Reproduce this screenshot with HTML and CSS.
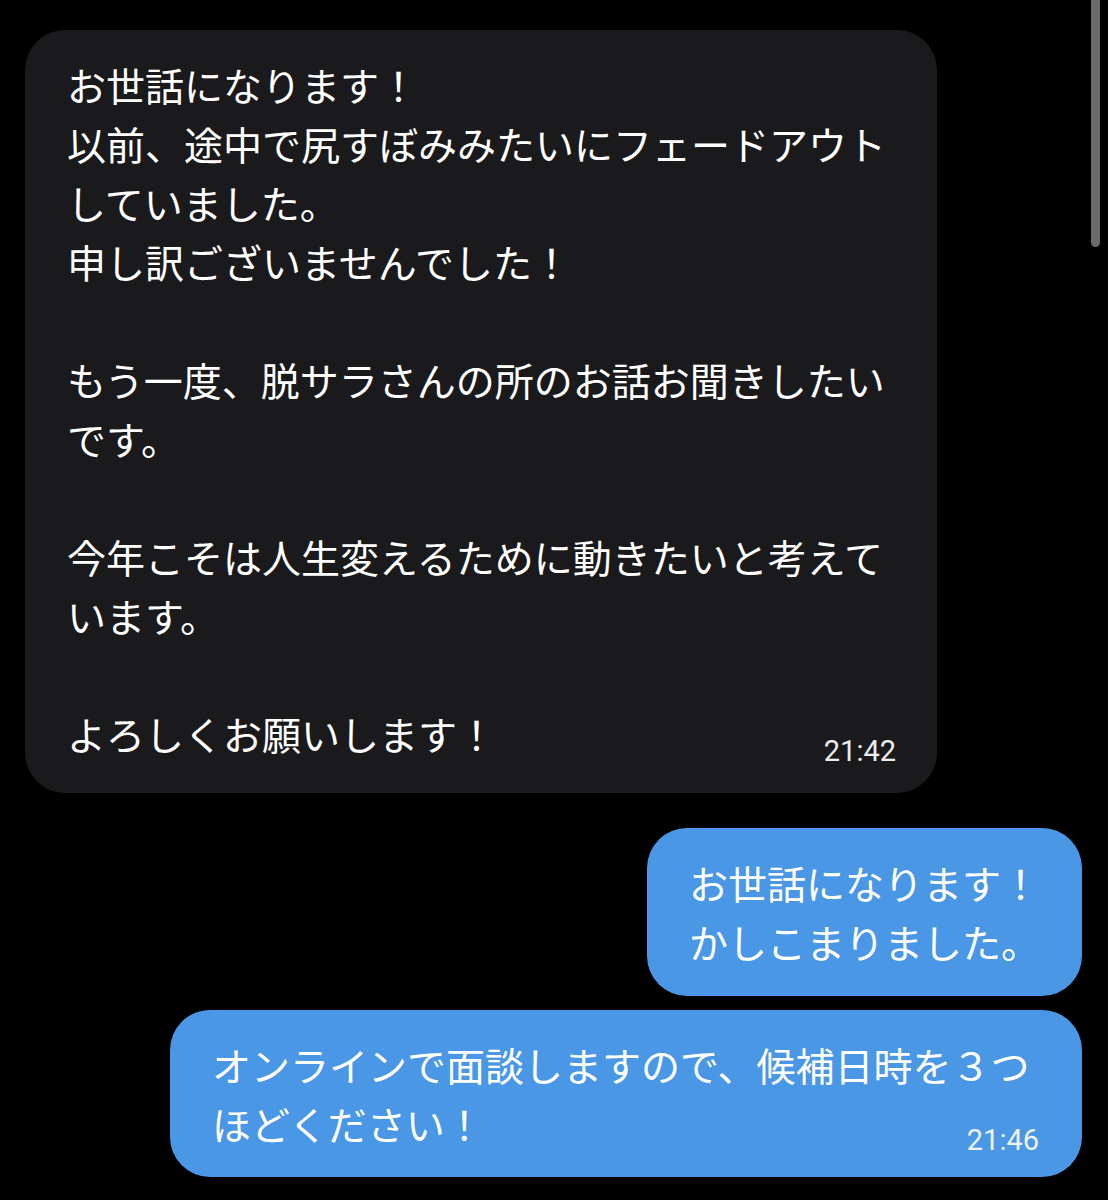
FILE: index.html
```html
<!DOCTYPE html>
<html lang="ja">
<head>
    <meta charset="UTF-8">
    <meta name="viewport" content="width=device-width, initial-scale=1.0">
    <title>メッセージ</title>
    <link rel="stylesheet" href="styles.css">
</head>
<body>
    <div class="chat">
        <div class="msg msg-in msg-wrap">
            <p class="msg-text">お世話になります！<br>以前、途中で尻すぼみみたいにフェードアウトしていました。<br>申し訳ございませんでした！<br><br>もう一度、脱サラさんの所のお話お聞きしたいです。<br><br>今年こそは人生変えるために動きたいと考えています。<br><br>よろしくお願いします！</p>
            <div class="msg-time">21:42</div>
        </div>
        <div class="msg msg-out msg-first">
            <p class="msg-text">お世話になります！<br>かしこまりました。</p>
        </div>
        <div class="msg msg-out msg-wrap">
            <p class="msg-text">オンラインで面談しますので、候補日時を３つ<br>ほどください！</p>
            <div class="msg-time">21:46</div>
        </div>
    </div>
    <div class="scroll-thumb"></div>
</body>
</html>
```

FILE: styles.css
```css
body {
    margin: 0;
    padding: 0;
    background-color: #000;
    color: #fff;
    font-family: "Noto Sans CJK JP", "Noto Sans", sans-serif;
}
.chat {
    display: flex;
    flex-direction: column;
    align-items: flex-start;
    padding: 30px 26px 0 25px;
}
.msg {
    box-sizing: border-box;
    max-width: 912px;
    padding: 25px 42px;
    border-radius: 40px;
}
.msg-wrap {
    width: 912px;
}
.msg-in {
    background-color: #1a1a1c;
    padding-bottom: 27px;
}
.msg-out {
    align-self: flex-end;
    background-color: #4a97e6;
    margin-top: 14px;
}
.msg-out.msg-first {
    margin-top: 35px;
}
.msg-text {
    margin: 0;
    font-size: 39px;
    line-height: 59px;
    line-break: strict;
}
.msg-time {
    display: flex;
    justify-content: flex-end;
    margin-top: -26px;
    margin-right: -1px;
    font-family: Roboto, "Liberation Sans", sans-serif;
    font-size: 29px;
    line-height: 29px;
    color: #ededed;
}
.msg-out .msg-time {
    margin-top: -27px;
    margin-bottom: -3px;
    margin-right: 1px;
    color: #eef4fc;
}
.scroll-thumb {
    position: fixed;
    top: 0;
    left: 1091px;
    width: 9px;
    height: 247px;
    border-radius: 0 0 5px 5px;
    background-color: #6b6b6b;
}
```
